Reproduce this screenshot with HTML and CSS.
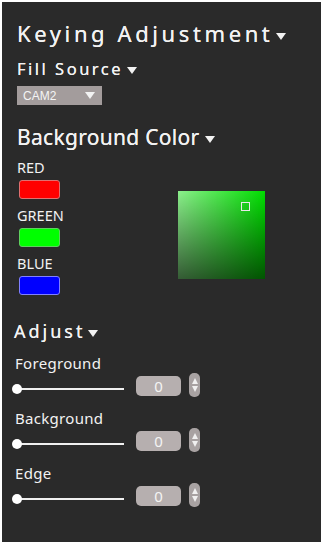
FILE: index.html
```html
<!DOCTYPE html>
<html lang="en">

<head>
    <meta charset="UTF-8">
    <meta name="viewport" content="width=device-width, initial-scale=1.0">
    <title>Keying Adjustment</title>
    <link rel="stylesheet" href="styles.css">
</head>

<body>
    <div class="panel">
        <h1 class="title">Keying Adjustment<span class="caret"></span></h1>

        <h2 class="sub">Fill Source<span class="caret"></span></h2>
        <div class="select">CAM2<span class="caret tiny"></span></div>

        <h2 class="bgcolor">Background Color<span class="caret"></span></h2>
        <div class="color-row">
            <div class="channels">
                <div class="label">RED</div>
                <div class="swatch red"></div>
                <div class="label">GREEN</div>
                <div class="swatch green"></div>
                <div class="label">BLUE</div>
                <div class="swatch blue"></div>
            </div>
            <div class="picker">
                <div class="marker"></div>
            </div>
        </div>

        <h2 class="sub adjust">Adjust<span class="caret"></span></h2>

        <div class="ctl">
            <div class="label">Foreground</div>
            <div class="ctl-row">
                <div class="slider"><span class="knob"></span></div>
                <div class="num">0</div>
                <div class="spin"><span class="up"></span><span class="down"></span></div>
            </div>
        </div>
        <div class="ctl">
            <div class="label">Background</div>
            <div class="ctl-row">
                <div class="slider"><span class="knob"></span></div>
                <div class="num">0</div>
                <div class="spin"><span class="up"></span><span class="down"></span></div>
            </div>
        </div>
        <div class="ctl">
            <div class="label">Edge</div>
            <div class="ctl-row">
                <div class="slider"><span class="knob"></span></div>
                <div class="num">0</div>
                <div class="spin"><span class="up"></span><span class="down"></span></div>
            </div>
        </div>
    </div>
</body>

</html>
```

FILE: styles.css
```css
body {
    margin: 0;
    background: #ffffff;
    font-family: "Noto Sans", "Open Sans", sans-serif;
    color: #f2f2f2;
}

.panel {
    margin: 2px 3px 3px 2px;
    height: 540px;
    background-color: #2a2a2a;
    padding: 0 0 0 14px;
    box-sizing: border-box;
    overflow: hidden;
}

h1, h2 {
    margin: 0;
    font-weight: normal;
    white-space: nowrap;
}

/* the little down triangles */
.caret {
    display: inline-block;
    width: 0;
    height: 0;
    border-left: 5px solid transparent;
    border-right: 5px solid transparent;
    border-top: 7px solid #f2f2f2;
    margin-left: 3px;
    vertical-align: middle;
}

.sub .caret {
    margin-left: 4px;
}

.caret.tiny {
    margin-left: 0;
}

.title {
    font-size: 22px;
    letter-spacing: 3.6px;
    line-height: 28px;
    padding-top: 17px;
    padding-left: 1px;
    text-shadow: 0 0 0.4px #f2f2f2;
}

.sub {
    font-size: 16.5px;
    letter-spacing: 2.5px;
    line-height: 22px;
    margin-top: 11px;
    padding-left: 1px;
    text-shadow: 0 0 0.4px #f2f2f2;
}

.select {
    display: flex;
    justify-content: space-between;
    align-items: center;
    width: 85px;
    height: 19px;
    box-sizing: border-box;
    margin-top: 6px;
    margin-left: 1px;
    padding: 0 7px 0 6px;
    background-color: #a39c9c;
    font-family: "Liberation Sans", Arial, sans-serif;
    font-size: 12px;
    color: #f4f4f4;
}

.bgcolor {
    font-size: 21px;
    letter-spacing: 0.3px;
    line-height: 26px;
    margin-top: 19px;
    padding-left: 1px;
    text-shadow: 0 0 0.4px #f2f2f2;
}

.bgcolor .caret {
    margin-left: 5px;
}

.color-row {
    display: flex;
    align-items: flex-start;
    margin-top: 8px;
}

.channels {
    width: 162px;
}

.label {
    font-size: 14.5px;
    line-height: 18px;
    padding-left: 1px;
}

.swatch {
    width: 41px;
    height: 19px;
    box-sizing: border-box;
    border-radius: 3px;
    margin: 4px 0 7px 3px;
    border: 1px solid;
}

.red {
    background: #ff0000;
    border-color: #e07070;
}

.green {
    background: #00ff00;
    border-color: #60d060;
}

.blue {
    background: #0000ff;
    border-color: #8080ff;
}

.picker {
    position: relative;
    width: 87px;
    height: 88px;
    margin-top: 33px;
    background:
        linear-gradient(to bottom, rgba(0, 0, 0, 0), rgba(0, 0, 0, 0.62)),
        linear-gradient(to right, rgba(255, 255, 255, 0.55), rgba(255, 255, 255, 0)),
        #00dd00;
}

.marker {
    position: absolute;
    left: 63px;
    top: 11px;
    width: 9px;
    height: 9px;
    border: 1px solid #e8e8e8;
    box-sizing: border-box;
}

.adjust {
    font-size: 18px;
    letter-spacing: 3px;
    line-height: 24px;
    margin-top: 17px;
    margin-left: -3px;
}

.adjust .caret {
    margin-left: 3px;
}

.ctl {
    margin-left: -2px;
}

.ctl .label {
    font-size: 15px;
    letter-spacing: 0.3px;
    margin-top: 11px;
}

.ctl-row {
    display: flex;
    align-items: center;
    height: 26px;
}

.slider {
    position: relative;
    width: 108px;
    height: 2px;
    margin-left: 2px;
    margin-top: 7px;
    background: #f0f0f0;
}

.knob {
    position: absolute;
    left: -4px;
    top: -4px;
    width: 10px;
    height: 10px;
    border-radius: 50%;
    background: #ffffff;
}

.num {
    width: 45px;
    height: 20px;
    margin-left: 12px;
    margin-top: 2px;
    border-radius: 5px;
    background: #b6afaf;
    text-align: center;
    font-size: 15px;
    line-height: 20px;
    color: #f4f4f4;
}

.spin {
    display: flex;
    flex-direction: column;
    align-items: center;
    justify-content: center;
    gap: 2px;
    width: 11px;
    height: 24px;
    margin-left: 8px;
    border-radius: 5px;
    background: #a8a2a2;
}

.spin .up, .spin .down {
    width: 0;
    height: 0;
    border-left: 3px solid transparent;
    border-right: 3px solid transparent;
}

.spin .up {
    border-bottom: 6px solid #f0f0f0;
}

.spin .down {
    border-top: 6px solid #f0f0f0;
}
```
